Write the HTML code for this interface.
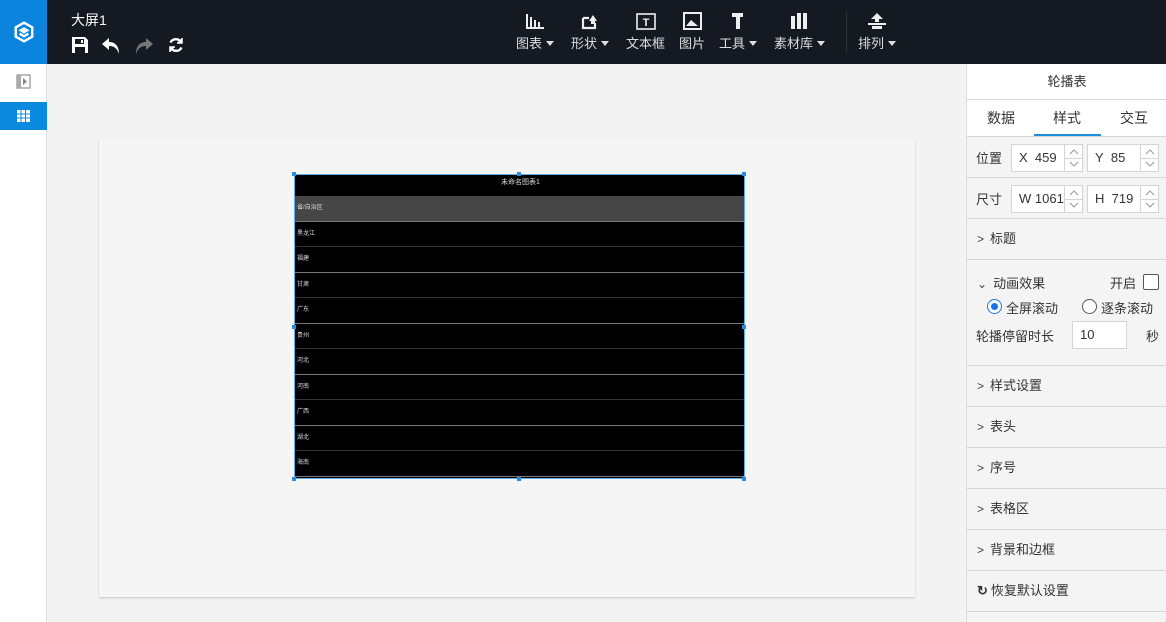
<!DOCTYPE html>
<html><head><meta charset="utf-8"><style>
*{box-sizing:border-box;margin:0;padding:0}
body{width:1166px;height:622px;overflow:hidden;background:#f3f3f3;font-family:"Liberation Sans","Noto Sans CJK SC",sans-serif;position:relative;font-size:13px;color:#333}
.abs{position:absolute}
#top{left:0;top:0;width:1166px;height:64px;background:#151922}
#logo{left:0;top:0;width:47px;height:64px;background:#0a84dc}
.tb{position:absolute;top:12px;text-align:center;color:#ddd;font-size:13px}
.tb svg{display:block;margin:0 auto 3px}
.car{display:inline-block;width:0;height:0;border-left:4px solid transparent;border-right:4px solid transparent;border-top:5px solid #ddd;vertical-align:middle;margin-left:4px;margin-top:-2px}
#side{left:0;top:64px;width:47px;height:558px;background:#fff;border-right:1px solid #ddd}
#board{left:99px;top:139px;width:816px;height:458px;background:#f5f5f5;box-shadow:0 1px 2px rgba(0,0,0,.2)}
#tbl{left:294px;top:174px;width:451px;height:305px;background:#000;border:1px solid #5ab0ee}
.row{position:absolute;left:0;width:449px;height:25.5px;color:#ddd;font-size:6px;line-height:25px;padding-left:2px}
#panel{left:966px;top:64px;width:200px;height:558px;background:#f4f4f4;border-left:1px solid #ddd}
.sec{position:absolute;left:0;width:200px;border-bottom:1px solid #d6d6d6;font-size:13px;color:#333}
.inp{position:absolute;background:#fff;border:1px solid #d4d4d4;height:28px;font-size:13px;line-height:26px;padding-left:7px}
.sp{position:absolute;right:0;top:0;width:18px;height:26px;border-left:1px solid #d4d4d4}
.sp:after{content:"";position:absolute;left:0;right:0;top:13px;border-top:1px solid #d4d4d4}
.sp svg{position:absolute;left:3px;top:0}
.chev{display:inline-block;font-size:12px;margin-right:6px;color:#444}
</style></head><body>
<div id="top" class="abs"></div>
<div id="logo" class="abs"><svg class="abs" style="left:13px;top:21px" width="22" height="22" viewBox="0 0 20 20" fill="none" stroke="#fff" stroke-width="2.2"><path d="M10 1.5L17.5 5.8V14.2L10 18.5L2.5 14.2V5.8Z"/><path d="M6 8.5L10 6.3L14 8.5L10 10.8Z" fill="#fff" stroke-width="1"/><path d="M6 11.5L10 13.8L14 11.5"/></svg></div>
<div class="abs" style="left:71px;top:10px;color:#fff;font-size:14px">大屏1</div>
<svg class="abs" style="left:71px;top:36px" width="18" height="18" viewBox="0 0 18 18"><path d="M1 1H14L17 4V17H1Z" fill="#fff"/><rect x="4" y="3" width="9" height="5" fill="#151922"/><rect x="4" y="11" width="10" height="6" fill="#151922"/><rect x="10" y="4" width="2" height="3" fill="#fff"/></svg>
<svg class="abs" style="left:101px;top:37px" width="20" height="18" viewBox="0 0 20 18"><path d="M8 1L1 7L8 13V9C13 9 16 11 18 17C18 10 15 5 8 5Z" fill="#fff"/></svg>
<svg class="abs" style="left:134px;top:37px" width="20" height="18" viewBox="0 0 20 18"><path d="M12 1L19 7L12 13V9C7 9 4 11 2 17C2 10 5 5 12 5Z" fill="#777"/></svg>
<svg class="abs" style="left:167px;top:36px" width="18" height="18" viewBox="0 0 18 18" fill="none" stroke="#fff" stroke-width="2.4"><path d="M14 6A6 6 0 0 0 3.5 6.5M4 12A6 6 0 0 0 14.5 11.5"/><path d="M15 2V7H10M3 16V11H8" fill="#fff" stroke-width="1.5"/></svg>

<div class="tb" style="left:516px"><svg width="20" height="18"><path d="M2 2V16H19" stroke="#eee" stroke-width="2" fill="none"/><rect x="5" y="5" width="2" height="10" fill="#eee"/><rect x="9" y="8" width="2" height="7" fill="#eee"/><rect x="13" y="10" width="2" height="5" fill="#eee"/></svg>图表<span class="car"></span></div>
<div class="tb" style="left:571px"><svg width="20" height="18"><path d="M3 6H9M3 6V16H15V11" stroke="#eee" stroke-width="2.2" fill="none"/><path d="M9 9H17L13 3Z" fill="#eee"/><rect x="11" y="7" width="4" height="5" fill="#eee"/></svg>形状<span class="car"></span></div>
<div class="tb" style="left:626px"><svg width="22" height="18"><rect x="2" y="2" width="18" height="15" stroke="#eee" stroke-width="1.6" fill="none"/><text x="11" y="14" fill="#eee" font-size="11" font-weight="bold" text-anchor="middle" font-family="Liberation Sans">T</text></svg>文本框</div>
<div class="tb" style="left:679px"><svg width="20" height="18"><rect x="2" y="1" width="17" height="16" stroke="#eee" stroke-width="2" fill="none"/><path d="M4 14L9 8L16 14Z" fill="#eee"/></svg>图片</div>
<div class="tb" style="left:719px"><svg width="20" height="18"><path d="M4 1H15V5H12V17H8V5H4Z" fill="#eee"/></svg>工具<span class="car"></span></div>
<div class="tb" style="left:774px"><svg width="20" height="18"><rect x="1" y="4" width="4" height="13" fill="#eee"/><rect x="7" y="1" width="4" height="16" fill="#eee"/><rect x="13" y="1" width="4" height="16" fill="#eee"/></svg>素材库<span class="car"></span></div>
<div class="abs" style="left:846px;top:12px;width:1px;height:40px;background:#333"></div>
<div class="tb" style="left:858px"><svg width="22" height="18"><path d="M11 1L5 7H9V10H13V7H17Z" fill="#eee"/><rect x="2" y="11" width="18" height="2" fill="#eee"/><rect x="6" y="14" width="10" height="3" fill="#eee"/></svg>排列<span class="car"></span></div>

<div id="side" class="abs">
<svg class="abs" style="left:16px;top:10px" width="15" height="15"><rect x="1" y="1" width="13" height="13" fill="none" stroke="#999" stroke-width="1.3"/><rect x="1" y="1" width="4" height="13" fill="#aaa"/><path d="M7 4L11 7.5L7 11Z" fill="#888"/></svg>
<div class="abs" style="left:0;top:38px;width:47px;height:28px;background:#0a8be0"><svg class="abs" style="left:17px;top:8px" width="13" height="12"><rect x="0" y="0" width="13" height="12" fill="#fff"/><path d="M0 4H13M0 8H13M4 0V12M8.5 0V12" stroke="#0a8be0" stroke-width="1"/></svg></div>
</div>

<div id="board" class="abs"></div>
<div id="tbl" class="abs">
<div class="row" style="top:0;height:21px;line-height:16px;text-align:center;font-size:7px">未命名图表1</div>
<div class="row" style="top:21px;background:#464646;border-bottom:1px solid #777">省/自治区</div>
<div class="row" style="top:46.5px;border-bottom:1px solid #333">黑龙江</div>
<div class="row" style="top:72px;border-bottom:1px solid #777">福建</div>
<div class="row" style="top:97.5px;border-bottom:1px solid #333">甘肃</div>
<div class="row" style="top:123px;border-bottom:1px solid #777">广东</div>
<div class="row" style="top:148.5px;border-bottom:1px solid #333">贵州</div>
<div class="row" style="top:174px;border-bottom:1px solid #777">河北</div>
<div class="row" style="top:199.5px;border-bottom:1px solid #333">河南</div>
<div class="row" style="top:225px;border-bottom:1px solid #777">广西</div>
<div class="row" style="top:250.5px;border-bottom:1px solid #333">湖北</div>
<div class="row" style="top:276px;border-bottom:1px solid #777">海南</div>
</div>
<div class="abs" style="left:292px;top:172px;width:4px;height:4px;background:#2a8de0"></div>
<div class="abs" style="left:517px;top:172px;width:4px;height:4px;background:#2a8de0"></div>
<div class="abs" style="left:742px;top:172px;width:4px;height:4px;background:#2a8de0"></div>
<div class="abs" style="left:292px;top:325px;width:4px;height:4px;background:#2a8de0"></div>
<div class="abs" style="left:742px;top:325px;width:4px;height:4px;background:#2a8de0"></div>
<div class="abs" style="left:292px;top:477px;width:4px;height:4px;background:#2a8de0"></div>
<div class="abs" style="left:517px;top:477px;width:4px;height:4px;background:#2a8de0"></div>
<div class="abs" style="left:742px;top:477px;width:4px;height:4px;background:#2a8de0"></div>

<div id="panel" class="abs">
<div class="sec" style="top:0;height:36px;background:#fff;text-align:center;line-height:36px">轮播表</div>
<div class="sec" style="top:36px;height:37px;background:#fff;font-size:14px;line-height:36px">
<span class="abs" style="left:20px">数据</span><span class="abs" style="left:86px">样式</span><span class="abs" style="left:153px">交互</span>
<div class="abs" style="left:67px;top:34px;width:67px;height:2px;background:#1a8ee0"></div></div>
<div class="sec" style="top:73px;height:41px"><span class="abs" style="left:9px;top:11px">位置</span>
<div class="inp" style="left:44px;top:7px;width:72px">X&nbsp; 459<div class="sp"><svg width="12" height="26"><path d="M2 9L6 5L10 9M2 17L6 21L10 17" stroke="#999" fill="none"/></svg></div></div>
<div class="inp" style="left:120px;top:7px;width:72px">Y&nbsp; 85<div class="sp"><svg width="12" height="26"><path d="M2 9L6 5L10 9M2 17L6 21L10 17" stroke="#999" fill="none"/></svg></div></div></div>
<div class="sec" style="top:114px;height:41px"><span class="abs" style="left:9px;top:11px">尺寸</span>
<div class="inp" style="left:44px;top:7px;width:72px">W 1061<div class="sp"><svg width="12" height="26"><path d="M2 9L6 5L10 9M2 17L6 21L10 17" stroke="#999" fill="none"/></svg></div></div>
<div class="inp" style="left:120px;top:7px;width:72px">H&nbsp; 719<div class="sp"><svg width="12" height="26"><path d="M2 9L6 5L10 9M2 17L6 21L10 17" stroke="#999" fill="none"/></svg></div></div></div>
<div class="sec" style="top:155px;height:41px;line-height:40px;padding-left:10px"><span class="chev">&gt;</span>标题</div>
<div class="sec" style="top:196px;height:106px">
<span class="abs" style="left:10px;top:13px"><span class="chev">⌄</span>动画效果</span>
<span class="abs" style="left:143px;top:13px">开启</span><div class="abs" style="left:176px;top:14px;width:16px;height:16px;border:1px solid #555;border-radius:2px;background:#fff"></div>
<div class="abs" style="left:20px;top:39px;width:15px;height:15px;border-radius:50%;border:1.5px solid #1a73e8;background:#fff"><div class="abs" style="left:2.5px;top:2.5px;width:7px;height:7px;border-radius:50%;background:#1a73e8"></div></div>
<span class="abs" style="left:39px;top:38px">全屏滚动</span>
<div class="abs" style="left:115px;top:39px;width:15px;height:15px;border-radius:50%;border:1px solid #555;background:#fff"></div>
<span class="abs" style="left:134px;top:38px">逐条滚动</span>
<span class="abs" style="left:9px;top:66px">轮播停留时长</span>
<div class="inp" style="left:105px;top:61px;width:55px">10</div>
<span class="abs" style="left:179px;top:66px">秒</span></div>
<div class="sec" style="top:302px;height:41px;line-height:40px;padding-left:10px"><span class="chev">&gt;</span>样式设置</div>
<div class="sec" style="top:343px;height:41px;line-height:40px;padding-left:10px"><span class="chev">&gt;</span>表头</div>
<div class="sec" style="top:384px;height:41px;line-height:40px;padding-left:10px"><span class="chev">&gt;</span>序号</div>
<div class="sec" style="top:425px;height:41px;line-height:40px;padding-left:10px"><span class="chev">&gt;</span>表格区</div>
<div class="sec" style="top:466px;height:41px;line-height:40px;padding-left:10px"><span class="chev">&gt;</span>背景和边框</div>
<div class="sec" style="top:507px;height:41px;line-height:40px;padding-left:10px"><span style="font-weight:bold;margin-right:3px">↻</span>恢复默认设置</div>
</div>
</body></html>
